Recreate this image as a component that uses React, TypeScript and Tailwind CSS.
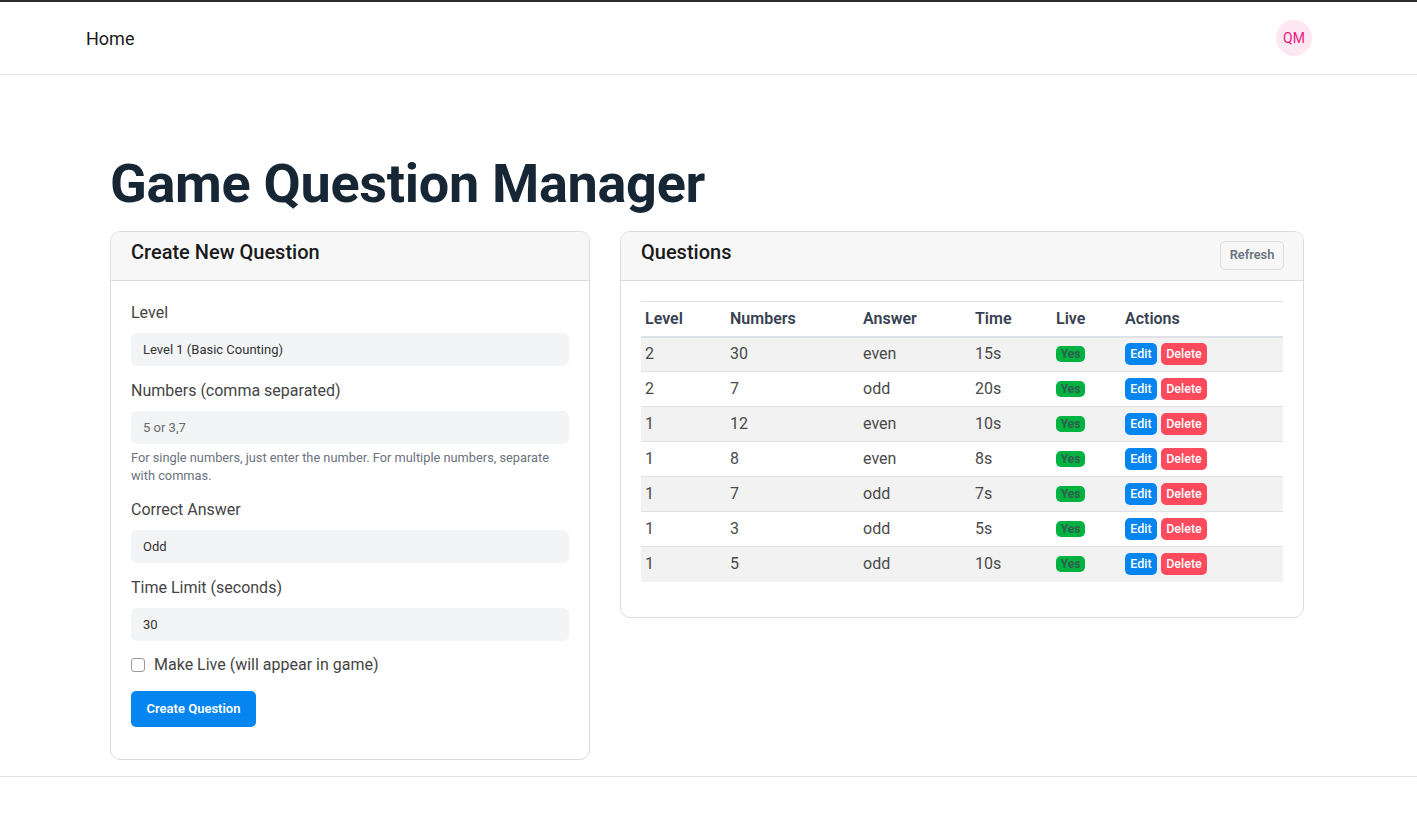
import React from "react";

const rows = [
  { level: 2, numbers: "30", answer: "even", time: "15s" },
  { level: 2, numbers: "7", answer: "odd", time: "20s" },
  { level: 1, numbers: "12", answer: "even", time: "10s" },
  { level: 1, numbers: "8", answer: "even", time: "8s" },
  { level: 1, numbers: "7", answer: "odd", time: "7s" },
  { level: 1, numbers: "3", answer: "odd", time: "5s" },
  { level: 1, numbers: "5", answer: "odd", time: "10s" },
];

function Field({ label, value }: { label: string; value: string }) {
  return (
    <div className="mb-3">
      <div className="text-[16px] leading-6 text-[#444] pt-px mb-2">{label}</div>
      <div className="h-[33px] rounded-[6px] bg-[#f3f4f6] px-3 flex items-center text-[13px] text-[#333]">
        {value}
      </div>
    </div>
  );
}

export default function App() {
  return (
    <div className="min-h-[817px] bg-white" style={{ fontFamily: "Roboto, 'Liberation Sans', sans-serif" }}>
      <div className="h-[2px] bg-[#2b2b2b]" />
      <header className="h-[73px] border-b border-[#e5e5e5] flex items-center justify-between pl-[86px] pr-[105px]">
        <span className="text-[18px] text-[#1a1a1a]">Home</span>
        <div className="w-9 h-9 rounded-full bg-[#fde8f2] flex items-center justify-center text-[14px] text-[#e8187e]">
          QM
        </div>
      </header>

      <main className="pl-[110px] pt-[74px]">
        <h1 className="text-[54px] leading-[70px] font-bold text-[#172634] tracking-[-0.3px] mb-[12px]">
          Game Question Manager
        </h1>

        <div className="flex items-start gap-[30px]">
          {/* Left card */}
          <section className="w-[480px] border border-[#dcdcdc] rounded-[10px] overflow-hidden">
            <div className="h-[49px] bg-[#f7f7f7] border-b border-[#dcdcdc] px-5 flex items-center">
              <h2 className="text-[20px] font-medium text-[#1a1a1a] -mt-[8px]">Create New Question</h2>
            </div>
            <div className="px-5 pt-[19px] pb-8">
              <Field label="Level" value="Level 1 (Basic Counting)" />
              <div className="mb-3">
                <div className="text-[16px] leading-6 text-[#444] pt-px mb-2">Numbers (comma separated)</div>
                <div className="h-[33px] rounded-[6px] bg-[#f3f4f6] px-3 flex items-center text-[13px] text-[#6b6b6b]">
                  5 or 3,7
                </div>
                <p className="mt-[5px] text-[12.8px] leading-[18px] text-[#6b7280]">
                  For single numbers, just enter the number. For multiple numbers, separate with commas.
                </p>
              </div>
              <Field label="Correct Answer" value="Odd" />
              <Field label="Time Limit (seconds)" value="30" />
              <label className="flex items-center h-6 mt-px text-[16px] text-[#444]">
                <span className="w-[14px] h-[14px] border border-[#9a9a9a] rounded-[3px] mr-[9px] bg-white" />
                Make Live (will appear in game)
              </label>
              <button className="mt-[14px] h-9 w-[125px] rounded-[5px] bg-[#0585f0] text-white text-[13px] font-semibold">
                Create Question
              </button>
            </div>
          </section>

          {/* Right card */}
          <section className="w-[684px] border border-[#dcdcdc] rounded-[10px] overflow-hidden">
            <div className="h-[49px] bg-[#f7f7f7] border-b border-[#dcdcdc] px-5 flex items-center justify-between">
              <h2 className="text-[20px] font-medium text-[#1a1a1a] -mt-[8px]">Questions</h2>
              <button className="h-[29px] w-[64px] rounded-[5px] border border-[#dcdcdc] bg-[#f7f7f7] text-[12.8px] font-semibold text-[#6b7280] -mt-[2px] -mr-[1px]">
                Refresh
              </button>
            </div>
            <div className="px-5 pt-5 pb-[35px]">
              <table className="w-full border-collapse text-left">
                <thead>
                  <tr className="border-t border-[#dee2e6] border-b-2 border-b-[#dee2e6]">
                    <th className="w-[85px] h-[35px] px-1 text-[16px] font-semibold text-[#374151]">Level</th>
                    <th className="w-[133px] px-1 text-[16px] font-semibold text-[#374151]">Numbers</th>
                    <th className="w-[112px] px-1 text-[16px] font-semibold text-[#374151]">Answer</th>
                    <th className="w-[81px] px-1 text-[16px] font-semibold text-[#374151]">Time</th>
                    <th className="w-[69px] px-1 text-[16px] font-semibold text-[#374151]">Live</th>
                    <th className="px-1 text-[16px] font-semibold text-[#374151]">Actions</th>
                  </tr>
                </thead>
                <tbody>
                  {rows.map((r, i) => (
                    <tr
                      key={i}
                      className={`${i % 2 === 0 ? "bg-[#f2f2f2]" : "bg-white"} ${
                        i > 0 ? "border-t border-[#dee2e6]" : ""
                      }`}
                    >
                      <td className="h-[35px] px-1 text-[16px] text-[#4a4a4a]">{r.level}</td>
                      <td className="px-1 text-[16px] text-[#4a4a4a]">{r.numbers}</td>
                      <td className="px-1 text-[16px] text-[#4a4a4a]">{r.answer}</td>
                      <td className="px-1 text-[16px] text-[#4a4a4a]">{r.time}</td>
                      <td className="px-1">
                        <div className="flex items-center">
                          <span className="flex items-center justify-center w-[29px] h-[16px] rounded-[5px] bg-[#00b341] text-[12px] font-bold text-[#2f5d4e]">
                            Yes
                          </span>
                        </div>
                      </td>
                      <td className="px-1">
                        <div className="flex items-center gap-1">
                          <button className="h-[22px] w-[32px] rounded-[5px] bg-[#0585f0] text-white text-[12.5px] font-medium">
                            Edit
                          </button>
                          <button className="h-[22px] w-[46px] rounded-[5px] bg-[#fd4a5c] text-white text-[12.5px] font-medium">
                            Delete
                          </button>
                        </div>
                      </td>
                    </tr>
                  ))}
                </tbody>
              </table>
            </div>
          </section>
        </div>
      </main>

      <div className="mt-[16px] border-t border-[#dee2e6]" />
    </div>
  );
}
